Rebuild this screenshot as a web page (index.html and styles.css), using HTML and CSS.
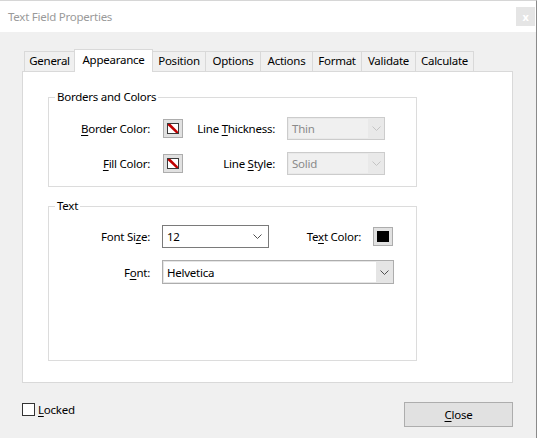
FILE: index.html
```html
<!DOCTYPE html>
<html>
<head>
<meta charset="utf-8">
<link rel="stylesheet" href="styles.css">
</head>
<body>
<div class="window">
  <div class="titlebar">
    <span class="title">Text Field Properties</span>
    <span class="xbtn">x</span>
  </div>
  <div class="body">
    <div class="tabs">
      <div class="tab w-general">General</div>
      <div class="tab active w-appearance">Appearance</div>
      <div class="tab w-position">Position</div>
      <div class="tab w-options">Options</div>
      <div class="tab w-actions">Actions</div>
      <div class="tab w-format">Format</div>
      <div class="tab w-validate">Validate</div>
      <div class="tab w-calculate">Calculate</div>
    </div>
    <div class="panel">
      <div class="group g1">
        <div class="legend">Borders and Colors</div>
        <div class="row r1">
          <label class="lab1"><u>B</u>order Color:</label>
          <span class="swatch">
            <svg width="20" height="19" viewBox="0 0 20 19"><rect x="0.5" y="0.5" width="19" height="18" fill="#e1e1e1" stroke="#adadad"/><rect x="4.5" y="4.5" width="11" height="10" fill="#fff" stroke="#3a3a3a"/><polygon points="5,5 7.5,5 15,12.5 15,14 13,14 5,6.5" fill="#c00000"/></svg>
          </span>
          <label class="lab2">Line <u>T</u>hickness:</label>
          <div class="select disabled"><span class="val">Thin</span><span class="arrow"><svg width="9" height="5" viewBox="0 0 9 5"><path d="M0.5 0.5 L4.5 4.5 L8.5 0.5" fill="none" stroke="#c4c4c4"/></svg></span></div>
        </div>
        <div class="row r2">
          <label class="lab1"><u>F</u>ill Color:</label>
          <span class="swatch">
            <svg width="20" height="19" viewBox="0 0 20 19"><rect x="0.5" y="0.5" width="19" height="18" fill="#e1e1e1" stroke="#adadad"/><rect x="4.5" y="4.5" width="11" height="10" fill="#fff" stroke="#3a3a3a"/><polygon points="5,5 7.5,5 15,12.5 15,14 13,14 5,6.5" fill="#c00000"/></svg>
          </span>
          <label class="lab2">Line <u>S</u>tyle:</label>
          <div class="select disabled"><span class="val">Solid</span><span class="arrow"><svg width="9" height="5" viewBox="0 0 9 5"><path d="M0.5 0.5 L4.5 4.5 L8.5 0.5" fill="none" stroke="#c4c4c4"/></svg></span></div>
        </div>
      </div>
      <div class="group g2">
        <div class="legend">Text</div>
        <div class="row r3">
          <label class="lab1">Font Si<u>z</u>e:</label>
          <div class="select plain size"><span class="val">12</span><span class="arrow"><svg width="9" height="5" viewBox="0 0 9 5"><path d="M0.5 0.5 L4.5 4.5 L8.5 0.5" fill="none" stroke="#505050"/></svg></span></div>
          <label class="lab3">Te<u>x</u>t Color:</label>
          <span class="swatch">
            <svg width="20" height="19" viewBox="0 0 20 19"><rect x="0.5" y="0.5" width="19" height="18" fill="#e1e1e1" stroke="#adadad"/><rect x="4" y="4" width="12" height="11" fill="#000"/></svg>
          </span>
        </div>
        <div class="row r4">
          <label class="lab1">F<u>o</u>nt:</label>
          <div class="select combo"><span class="val">Helvetica</span><span class="arrow"><svg width="9" height="5" viewBox="0 0 9 5"><path d="M0.5 0.5 L4.5 4.5 L8.5 0.5" fill="none" stroke="#505050"/></svg></span></div>
        </div>
      </div>
    </div>
    <div class="footer">
      <label class="check"><span class="box"></span><span><u>L</u>ocked</span></label>
      <div class="button"><u>C</u>lose</div>
    </div>
  </div>
</div>
</body>
</html>
```

FILE: styles.css
```css
* { box-sizing: border-box; }
html, body { margin: 0; padding: 0; }
body {
  width: 537px;
  height: 438px;
  overflow: hidden;
  background: #f0f0f0;
  font-family: "Noto Sans", "Open Sans", sans-serif;
  font-size: 11.5px;
  letter-spacing: -0.25px;
  color: #000;
}
u { text-decoration: underline; text-underline-offset: 2px; text-decoration-thickness: 1px; }
.window { width: 537px; height: 438px; border-top: 1px solid #d6d6d6; border-right: 1px solid #8a8a8a; }
.titlebar {
  height: 31px;
  background: #fff;
  display: flex;
  align-items: center;
  padding-left: 8px;
  padding-right: 1px;
}
.title { color: #9a9a9a; font-size: 11.5px; }
.xbtn {
  margin-left: auto;
  width: 19px;
  height: 19px;
  background: #e5e5e5;
  color: #fff;
  font-size: 11px;
  display: flex;
  align-items: center;
  justify-content: center;
  font-weight: bold;
}
.body { padding-top: 17px; }
.tabs {
  display: flex;
  align-items: flex-end;
  height: 22px;
  padding-left: 24px;
}
.tab {
  height: 20px;
  border: 1px solid #d9d9d9;
  border-bottom: none;
  margin-right: -1px;
  background: #f0f0f0;
  display: flex;
  align-items: center;
  justify-content: center;
  line-height: 1;
  padding-bottom: 1px;
}
.tab.active {
  height: 23px;
  margin-bottom: -1px;
  background: #fff;
  position: relative;
  z-index: 1;
  padding-bottom: 3px;
}
.w-general { width: 51px; }
.w-appearance { width: 79px; }
.w-position { width: 54px; }
.w-options { width: 56px; }
.w-actions { width: 53px; }
.w-format { width: 50px; }
.w-validate { width: 55px; }
.w-calculate { width: 59px; }
.panel {
  margin-left: 22px;
  width: 491px;
  height: 312px;
  background: #fff;
  border: 1px solid #d9d9d9;
  padding: 25px 0 0 25px;
}
.group {
  width: 369px;
  border: 1px solid #dcdcdc;
}
.g1 { height: 90px; }
.g2 { height: 155px; margin-top: 19px; }
.legend {
  margin: -9px 0 0 6px;
  padding: 0 2px;
  background: #fff;
  width: fit-content;
  line-height: 16px;
  height: 16px;
}
.row { display: flex; align-items: center; }
.r1 { height: 23px; margin-top: 12px; }
.r2 { height: 23px; margin-top: 12px; }
.r3 { height: 23px; margin-top: 11px; }
.r4 { height: 24px; margin-top: 12px; }
.lab1 { width: 101px; text-align: right; }
.lab2 { width: 92px; text-align: right; margin-right: 12px; }
.lab3 { width: 92px; text-align: right; margin-right: 12px; }
.r1 .lab1, .r2 .lab1 { margin-right: 13px; }
.r3 .lab1, .r4 .lab1 { margin-right: 12px; }
.swatch { width: 20px; height: 19px; display: block; }
.swatch svg { display: block; }
.select {
  display: flex;
  align-items: stretch;
  height: 100%;
}
.select .val { flex: 1; display: flex; align-items: center; padding-left: 4px; }
.select .arrow { width: 17px; display: flex; align-items: center; justify-content: center; }
.select .arrow svg { display: block; }
.disabled {
  width: 98px;
  border: 1px solid #cccccc;
  background: #e9e9e9;
  padding: 1px 0 1px 1px;
  color: #8a8a8a;
}
.disabled .val { background: #f0f0f0; padding-left: 3px; }
.disabled .arrow { width: 16px; }
.plain {
  width: 107px;
  border: 1px solid #7a7a7a;
  background: #fff;
}
.plain .arrow { width: 22px; }
.combo {
  width: 232px;
  border: 1px solid #adadad;
  background: #e5e5e5;
  padding: 1px 0 1px 1px;
}
.combo .val { background: #fff; padding-left: 3px; }
.footer {
  display: flex;
  justify-content: space-between;
  align-items: flex-start;
  margin-top: 19px;
  padding-left: 22px;
  padding-right: 23px;
}
.check { display: flex; align-items: center; gap: 3px; margin-top: 0px; line-height: 15px; }
.box { width: 13px; height: 13px; border: 1px solid #333; background: #fff; display: block; }
.button {
  width: 109px;
  height: 25px;
  background: #e1e1e1;
  border: 1px solid #adadad;
  display: flex;
  align-items: center;
  justify-content: center;
}
```
